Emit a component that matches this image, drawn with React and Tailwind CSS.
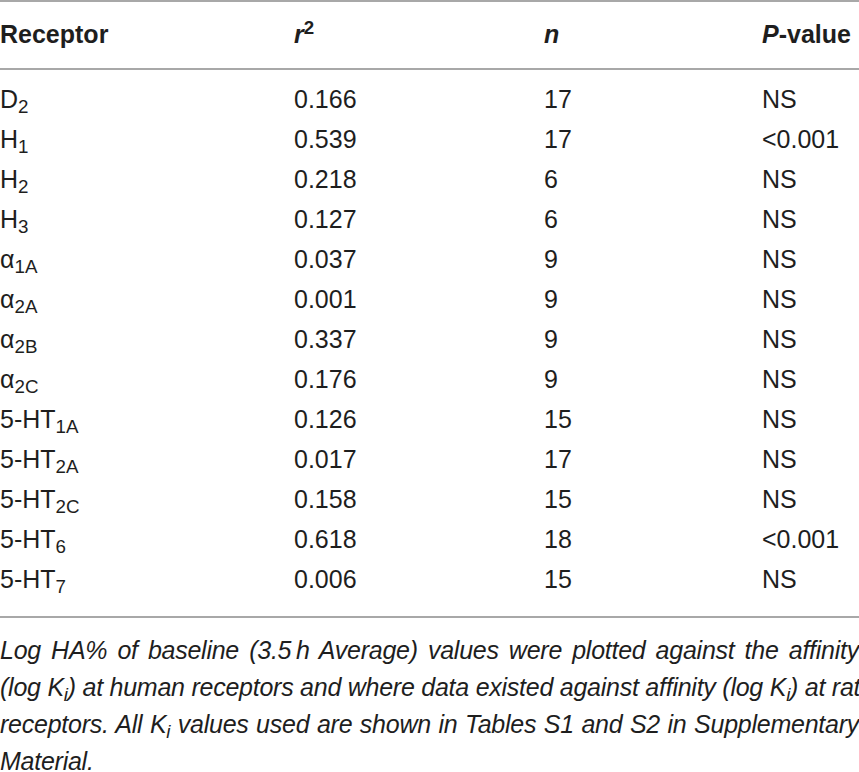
const rows = [
  ["D", "2", "0.166", "17", "NS"],
  ["H", "1", "0.539", "17", "<0.001"],
  ["H", "2", "0.218", "6", "NS"],
  ["H", "3", "0.127", "6", "NS"],
  ["α", "1A", "0.037", "9", "NS"],
  ["α", "2A", "0.001", "9", "NS"],
  ["α", "2B", "0.337", "9", "NS"],
  ["α", "2C", "0.176", "9", "NS"],
  ["5-HT", "1A", "0.126", "15", "NS"],
  ["5-HT", "2A", "0.017", "17", "NS"],
  ["5-HT", "2C", "0.158", "15", "NS"],
  ["5-HT", "6", "0.618", "18", "<0.001"],
  ["5-HT", "7", "0.006", "15", "NS"],
];

const cols = "grid grid-cols-[294px_250px_218px_1fr]";
const justified = "whitespace-nowrap text-justify [text-align-last:justify]";

export default function App() {
  return (
    <div className="w-[859px] h-[772px] overflow-hidden bg-white text-[#1e1e1e] font-['Liberation_Sans',Arial,sans-serif] text-[25px]">
      <div className="border-t-2 border-b-2 border-[#a8a8a8]">
        <div className={`${cols} font-bold leading-[40px] pt-[12px] pb-[14px]`}>
          <div>Receptor</div>
          <div>
            <i>r</i>
            <sup>2</sup>
          </div>
          <div>
            <i>n</i>
          </div>
          <div>
            <i>P</i>-value
          </div>
        </div>
      </div>
      <div className="border-b-2 border-[#a8a8a8] pt-[9px] pb-[17px]">
        {rows.map((r) => (
          <div key={r[0] + r[1]} className={`${cols} leading-[40px]`}>
            <div>
              {r[0]}
              <sub>{r[1]}</sub>
            </div>
            <div>{r[2]}</div>
            <div>{r[3]}</div>
            <div>{r[4]}</div>
          </div>
        ))}
      </div>
      {/* table footnote */}
      <div className="pt-[14px] italic leading-[37px] text-[25px] tracking-[-0.01em]">
        <div className={justified}>
          Log HA% of baseline (3.5{"\u2009"}h Average) values were plotted against the affinity
        </div>
        <div className={justified}>
          (log K<sub>i</sub>) at human receptors and where data existed against affinity (log K<sub>i</sub>) at rat
        </div>
        <div className={justified}>
          receptors. All K<sub>i</sub> values used are shown in Tables S1 and S2 in Supplementary
        </div>
        <div className="whitespace-nowrap">Material.</div>
      </div>
    </div>
  );
}
